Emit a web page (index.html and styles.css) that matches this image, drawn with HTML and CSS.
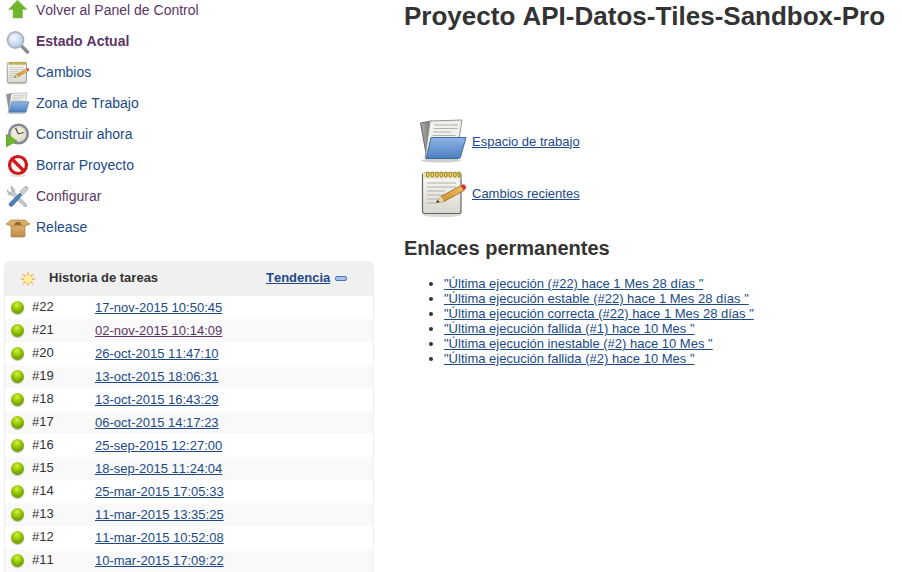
FILE: index.html
```html
<!DOCTYPE html>
<html lang="es">
<head>
<meta charset="utf-8">
<title>Proyecto API-Datos-Tiles-Sandbox-Pro</title>
<link rel="stylesheet" href="styles.css">
</head>
<body>
<svg class="defs" width="0" height="0" aria-hidden="true">
  <defs>
    <linearGradient id="folder" x1="0" y1="0" x2="0" y2="1">
      <stop offset="0" stop-color="#8fb4e4"/><stop offset="1" stop-color="#4c7fc0"/>
    </linearGradient>
    <linearGradient id="paper" x1="0" y1="0" x2="0" y2="1">
      <stop offset="0" stop-color="#fbfbf6"/><stop offset="1" stop-color="#d8d8d0"/>
    </linearGradient>
    <linearGradient id="back" x1="0" y1="0" x2="1" y2="0">
      <stop offset="0" stop-color="#b0b0b0"/><stop offset="1" stop-color="#6e6e6e"/>
    </linearGradient>
    <linearGradient id="box" x1="0" y1="0" x2="0" y2="1">
      <stop offset="0" stop-color="#e6b46c"/><stop offset="1" stop-color="#bd8a48"/>
    </linearGradient>
    <linearGradient id="pencil" x1="0" y1="1" x2="1" y2="0">
      <stop offset="0" stop-color="#c98a2c"/><stop offset="1" stop-color="#f0c060"/>
    </linearGradient>
    <radialGradient id="lens" cx="40%" cy="35%" r="70%">
      <stop offset="0" stop-color="#f4f9ff"/><stop offset="1" stop-color="#a9c8e8"/>
    </radialGradient>
    <radialGradient id="face" cx="45%" cy="40%" r="60%">
      <stop offset="0" stop-color="#fbfaec"/><stop offset="1" stop-color="#d8d6b8"/>
    </radialGradient>
    <symbol id="i-notes" viewBox="0 0 48 48">
      <ellipse cx="22" cy="45" rx="19" ry="2" fill="#d8d8d8"/>
      <rect x="2.500" y="3" width="38.500" height="40.500" rx="2" fill="url(#paper)" stroke="#66665f" stroke-width="1.200"/>
      <rect x="3" y="3" width="37.500" height="5.500" fill="#e6e2c0"/>
      <g fill="#f0d850" stroke="#8a7410" stroke-width=".9">
        <rect x="6.500" y="2" width="2.600" height="5" rx="1.300"/><rect x="11" y="2" width="2.600" height="5" rx="1.300"/>
        <rect x="15.500" y="2" width="2.600" height="5" rx="1.300"/><rect x="20" y="2" width="2.600" height="5" rx="1.300"/>
        <rect x="24.500" y="2" width="2.600" height="5" rx="1.300"/><rect x="29" y="2" width="2.600" height="5" rx="1.300"/>
        <rect x="33.500" y="2" width="2.600" height="5" rx="1.300"/><rect x="38" y="2" width="2" height="5" rx="1"/>
      </g>
      <path d="M7 13h29M7 17h29M7 21h18M7 25h25M7 29h12M7 33h8" stroke="#b0b0a8" stroke-width="1"/>
      <path d="M16 32.500l5-6 20-11 3 5-20 11z" fill="url(#pencil)" stroke="#8a5a18" stroke-width=".7"/>
      <path d="M41 15.500l3-1.500 2.500 3.500-2.500 3z" fill="#dc3030"/>
      <path d="M16 32.500l5-6 3 5z" fill="#e8d8b0"/>
      <path d="M16 32.500l2-2.400 1.500 2.200z" fill="#333"/>
    </symbol>
    <symbol id="i-folder" viewBox="0 0 48 48">
      <ellipse cx="21" cy="42.500" rx="20" ry="2" fill="#d0d0d0"/>
      <path d="M.5 5L12 3v17L7 41z" fill="url(#back)" stroke="#5c5c5c" stroke-width=".9"/>
      <path d="M5 40L10 3l32-1-5 32z" fill="#f0f0ec" stroke="#8a8a8a" stroke-width=".9"/>
      <path d="M14 7h24M13.500 10.500h24M13 14h18M12.500 17.500h23" stroke="#a8a8a8" stroke-width=".9"/>
      <path d="M11 19.500h35l-5.500 19.500a2 2 0 0 1-2 1.500H6z" fill="url(#folder)" stroke="#33608f" stroke-width=".9"/>
    </symbol>
  </defs>
</svg>

<div class="page">
  <aside class="side">
    <nav class="tasks">
      <a class="task visited" href="#">
        <svg class="ti" viewBox="0 0 24 24"><path d="M11.500 1L21 10.500H16.500V19H7V10.500H2.500z" fill="#6fb52c" stroke="#8fc060" stroke-width=".6"/></svg>
        <span>Volver al Panel de Control</span>
      </a>
      <a class="task current visited" href="#">
        <svg class="ti" viewBox="0 0 24 24"><path d="M14.500 15l7 7" stroke="#8a8a8a" stroke-width="3.400" stroke-linecap="round"/><circle cx="9.500" cy="10" r="8" fill="url(#lens)" stroke="#b0b4ba" stroke-width="1.800"/></svg>
        <span>Estado Actual</span>
      </a>
      <a class="task" href="#">
        <svg class="ti"><use href="#i-notes"/></svg>
        <span>Cambios</span>
      </a>
      <a class="task" href="#">
        <svg class="ti"><use href="#i-folder"/></svg>
        <span>Zona de Trabajo</span>
      </a>
      <a class="task" href="#">
        <svg class="ti" viewBox="0 0 24 24"><circle cx="12.500" cy="11" r="10.500" fill="#85859a"/><circle cx="12.500" cy="11" r="8" fill="url(#face)"/><path d="M12.500 11L9.500 5M12.500 11l5-1.500" stroke="#444" stroke-width="1.300"/><path d="M0 11l11 7-11 6z" fill="#6fb52c" stroke="#4b8a16" stroke-width=".5"/></svg>
        <span>Construir ahora</span>
      </a>
      <a class="task" href="#">
        <svg class="ti" viewBox="0 0 24 24"><ellipse cx="12" cy="21.500" rx="8" ry="1.300" fill="#ddd"/><circle cx="12" cy="11" r="8.500" fill="#f6f6f6" stroke="#d01818" stroke-width="3.200"/><path d="M6 5l12 12" stroke="#d01818" stroke-width="3.200"/></svg>
        <span>Borrar Proyecto</span>
      </a>
      <a class="task visited" href="#">
        <svg class="ti" viewBox="0 0 24 24"><path d="M5 1l4 4-1 2 13 13-2 2L6 10 3 10 1 5l3 3 2-1z" fill="#c8ccd0" stroke="#8a8e94" stroke-width=".6"/><path d="M20 1l2.500 2.500-5.500 6-3-3z" fill="#ccd0d4" stroke="#888" stroke-width=".6"/><path d="M14 8l2 2-9 10.500c-1 1-3 1-3.500 0s-.5-2 .5-3z" fill="#4c7fb8" stroke="#2c5a90" stroke-width=".6"/></svg>
        <span>Configurar</span>
      </a>
      <a class="task" href="#">
        <svg class="ti" viewBox="0 0 24 24"><path d="M5 9h14v11a1 1 0 0 1-1 1H6a1 1 0 0 1-1-1z" fill="url(#box)" stroke="#9a7030" stroke-width=".6"/><path d="M5 10L0 8l5-4h14l5 4-5 2z" fill="#dcae68" stroke="#9a7030" stroke-width=".6"/><path d="M8 9l2-3h4l2 3z" fill="#8a6a3a"/></svg>
        <span>Release</span>
      </a>
    </nav>

    <section class="history">
      <header class="history-head">
        <svg class="sun" viewBox="0 0 16 16"><g stroke="#f6b85a" stroke-width="1.500"><path d="M8 0v16M0 8h16M2.300 2.300l11.400 11.400M13.700 2.300L2.300 13.700"/></g><circle cx="8" cy="8" r="5" fill="#fdf0a0" stroke="#f6c46a"/></svg>
        <span class="history-title">Historia de tareas</span>
        <a class="trend" href="#">Tendencia</a>
        <span class="trend-icon"></span>
      </header>
      <div class="build"><i class="ball"></i><span class="num">#22</span><a href="#">17-nov-2015 10:50:45</a></div>
      <div class="build alt"><i class="ball"></i><span class="num">#21</span><a class="seen" href="#">02-nov-2015 10:14:09</a></div>
      <div class="build"><i class="ball"></i><span class="num">#20</span><a href="#">26-oct-2015 11:47:10</a></div>
      <div class="build alt"><i class="ball"></i><span class="num">#19</span><a href="#">13-oct-2015 18:06:31</a></div>
      <div class="build"><i class="ball"></i><span class="num">#18</span><a href="#">13-oct-2015 16:43:29</a></div>
      <div class="build alt"><i class="ball"></i><span class="num">#17</span><a href="#">06-oct-2015 14:17:23</a></div>
      <div class="build"><i class="ball"></i><span class="num">#16</span><a href="#">25-sep-2015 12:27:00</a></div>
      <div class="build alt"><i class="ball"></i><span class="num">#15</span><a href="#">18-sep-2015 11:24:04</a></div>
      <div class="build"><i class="ball"></i><span class="num">#14</span><a href="#">25-mar-2015 17:05:33</a></div>
      <div class="build alt"><i class="ball"></i><span class="num">#13</span><a href="#">11-mar-2015 13:35:25</a></div>
      <div class="build"><i class="ball"></i><span class="num">#12</span><a href="#">11-mar-2015 10:52:08</a></div>
      <div class="build alt"><i class="ball"></i><span class="num">#11</span><a href="#">10-mar-2015 17:09:22</a></div>
    </section>
  </aside>

  <main class="main">
    <h1>Proyecto API-Datos-Tiles-Sandbox-Pro</h1>
    <div class="big-links">
      <div class="big-link"><svg class="bi folder-big"><use href="#i-folder"/></svg><a href="#">Espacio de trabajo</a></div>
      <div class="big-link"><svg class="bi notes-big"><use href="#i-notes"/></svg><a href="#">Cambios recientes</a></div>
    </div>
    <h2>Enlaces permanentes</h2>
    <ul class="perma">
      <li><a href="#">"Última ejecución (#22) hace 1 Mes 28 días "</a></li>
      <li><a href="#">"Última ejecución estable (#22) hace 1 Mes 28 días "</a></li>
      <li><a href="#">"Última ejecución correcta (#22) hace 1 Mes 28 días "</a></li>
      <li><a href="#">"Última ejecución fallida (#1) hace 10 Mes "</a></li>
      <li><a href="#">"Última ejecución inestable (#2) hace 10 Mes "</a></li>
      <li><a href="#">"Última ejecución fallida (#2) hace 10 Mes "</a></li>
    </ul>
  </main>
</div>
</body>
</html>
```
FILE: styles.css
```css
* { box-sizing: border-box; }
html, body { margin: 0; height: 100%; overflow: hidden; }
body { background: #fff; color: #333; font-family: "Liberation Sans", Arial, sans-serif; font-size: 13px; font-kerning: none; }
a { color: #204a87; }
.defs { display: block; height: 0; }

.page { display: flex; align-items: flex-start; }
.side { flex: 0 0 404px; padding: 0 30px 0 4px; margin-top: -5px; }

.tasks { display: flex; flex-direction: column; }
.task { display: flex; align-items: center; height: 31px; gap: 6px; padding-left: 2px; font-size: 14px; line-height: 31px; text-decoration: none; color: #204a87; }
.task.visited { color: #5c3566; }
.task.current { font-weight: bold; }
.ti { flex: 0 0 24px; width: 24px; height: 24px; }

.history { margin-top: 18px; border: 1px solid #eee; border-width: 0 1px; border-radius: 6px 6px 0 0; overflow: hidden; }
.history-head { display: flex; align-items: center; height: 35px; background: #f0f0f0; padding: 0 0 2px 16px; }
.sun { width: 14px; height: 14px; margin-top: 2px; }
.history-title { font-weight: bold; margin-left: 14px; width: 217px; }
.trend { font-weight: bold; }
.trend-icon { width: 12px; height: 5px; margin: 2px 0 0 5px; background: #a8c4e8; border: 1px solid #4a78b4; border-radius: 2px; }

.build { display: flex; align-items: center; height: 23px; padding-left: 6px; }
.build.alt { background: #f9f9f9; }
.ball { flex: 0 0 13px; width: 13px; height: 13px; border-radius: 50%; background: radial-gradient(circle at 45% 30%, #d4f040 0, #8ebf00 45%, #4a7a00 100%); box-shadow: 0 1px 1px #bbb; }
.num { width: 63px; margin: 0 0 2px 8px; }
.seen { color: #5c3566; }

.main { flex: 1; min-width: 0; padding-top: 1px; }
h1 { margin: 0; font-size: 26px; line-height: 30px; color: #333; font-weight: bold; }
.big-links { margin-top: 86px; padding-left: 16px; display: flex; flex-direction: column; gap: 4px; }
.big-link { display: flex; align-items: center; height: 48px; gap: 3px; }
.big-link a { margin-left: 1px; }
.bi { flex: 0 0 48px; width: 48px; height: 48px; }
.folder-big { margin-top: 2px; }
.notes-big { margin-top: 1px; }
h2 { margin: 18px 0 0; font-size: 20px; line-height: 26px; color: #333; font-weight: bold; }
.perma { margin: 15px 0 0; padding-left: 40px; line-height: 15px; }
```
